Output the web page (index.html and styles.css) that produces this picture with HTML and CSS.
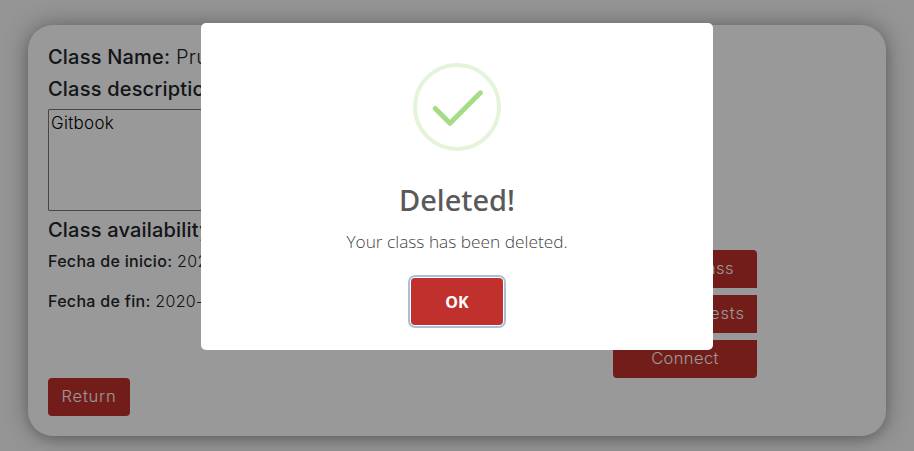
FILE: index.html
```html
<!DOCTYPE html>
<html lang="en">
<head>
<meta charset="utf-8">
<title>Class</title>
<link rel="stylesheet" href="styles.css">
</head>
<body>
<main class="card">
  <section class="details">
    <h5 class="heading name"><b>Class Name:</b> Prueba</h5>
    <h5 class="heading description"><b>Class description:</b></h5>
    <textarea class="text" readonly>Gitbook</textarea>
    <h5 class="heading availability"><b>Class availability:</b></h5>
    <p class="date start"><b>Fecha de inicio:</b> 2020-11-02</p>
    <p class="date end"><b>Fecha de fin:</b> 2020-12-02</p>
    <button class="btn return">Return</button>
  </section>
  <aside class="actions">
    <button class="btn first">Delete class</button>
    <button class="btn middle">View requests</button>
    <button class="btn last">Connect</button>
  </aside>
</main>
<div class="overlay">
  <div class="modal" role="dialog">
    <svg class="success" viewBox="0 0 88 88" fill="none">
      <circle cx="44" cy="44" r="42" stroke="#e4f4da" stroke-width="4"/>
      <path d="M22.2 45.4 37 60.2 67.4 29.8" stroke="#a5dc86" stroke-width="5" stroke-linecap="round" stroke-linejoin="round"/>
    </svg>
    <h2 class="title">Deleted!</h2>
    <p class="message">Your class has been deleted.</p>
    <button class="confirm">OK</button>
  </div>
</div>
</body>
</html>
```
FILE: styles.css
```css
* { box-sizing: border-box; }
body {
  margin: 0;
  height: 451px;
  overflow: hidden;
  background: #f8f8f8;
  color: #212529;
  font: 300 16px/24px Inter, sans-serif;
  padding: 25px 28px 15px;
}
h5, h2, p { margin: 0; }
b { font-weight: 500; }
.card {
  display: flex;
  height: 411px;
  padding: 20px;
  border-radius: 25px;
  background: #fff;
  box-shadow: 0 4px 8px rgba(0, 0, 0, .12), 0 0 24px rgba(0, 0, 0, .35);
}
.details {
  display: flex;
  flex-direction: column;
  align-items: flex-start;
  width: 565px;
}
.heading {
  height: 24px;
  font-size: 20px;
  font-weight: 300;
  line-height: 24px;
  letter-spacing: .2px;
  white-space: nowrap;
}
.description { margin-top: 8px; }
.text {
  width: 300px;
  height: 102px;
  margin: 8px 0 7px;
  padding: 1px 2px;
  border: 1px solid #767676;
  border-radius: 1px;
  resize: none;
  outline: none;
  color: #000;
  font: inherit;
  font-size: 17px;
  letter-spacing: .3px;
}
.date { white-space: nowrap; letter-spacing: .3px; }
.start { margin-top: 7px; }
.end { margin-top: 16px; }
.btn {
  height: 38px;
  padding: 0 0 2px;
  border: 0;
  border-radius: 4px;
  background: #c0312e;
  color: #fff;
  font: 300 16.5px/24px Inter, sans-serif;
  letter-spacing: .4px;
  white-space: nowrap;
}
.return { width: 82px; margin-top: 65px; letter-spacing: .8px; }
.actions {
  display: flex;
  flex-direction: column;
  gap: 7px;
  width: 144px;
  padding-top: 205px;
}
.first { border-radius: 4px 4px 0 0; }
.middle { border-radius: 0; letter-spacing: .85px; }
.last { border-radius: 0 0 4px 4px; }
.overlay {
  position: fixed;
  inset: 0;
  display: flex;
  align-items: flex-start;
  justify-content: center;
  padding-top: 23px;
  background: rgba(0, 0, 0, .4);
}
.modal {
  display: flex;
  flex-direction: column;
  align-items: center;
  width: 512px;
  height: 327px;
  padding-top: 40px;
  border-radius: 5px;
  background: #fff;
  font-family: "Open Sans", sans-serif;
}
.success { width: 88px; height: 88px; }
.title {
  margin-top: 31px;
  color: #595959;
  font: 500 29px/36px "Noto Sans", sans-serif;
}
.message {
  margin-top: 10px;
  color: #454545;
  font-size: 17.3px;
  font-weight: 340;
  line-height: 27px;
  white-space: nowrap;
}
.confirm {
  width: 92px;
  height: 47px;
  margin-top: 23px;
  padding: 0;
  border: 0;
  border-radius: 4px;
  background: #c0312e;
  box-shadow: 0 0 0 1px #fff, 0 0 0 3px #abc0d8;
  color: #fff;
  font: 700 16px/24px "Open Sans", sans-serif;
}
```
